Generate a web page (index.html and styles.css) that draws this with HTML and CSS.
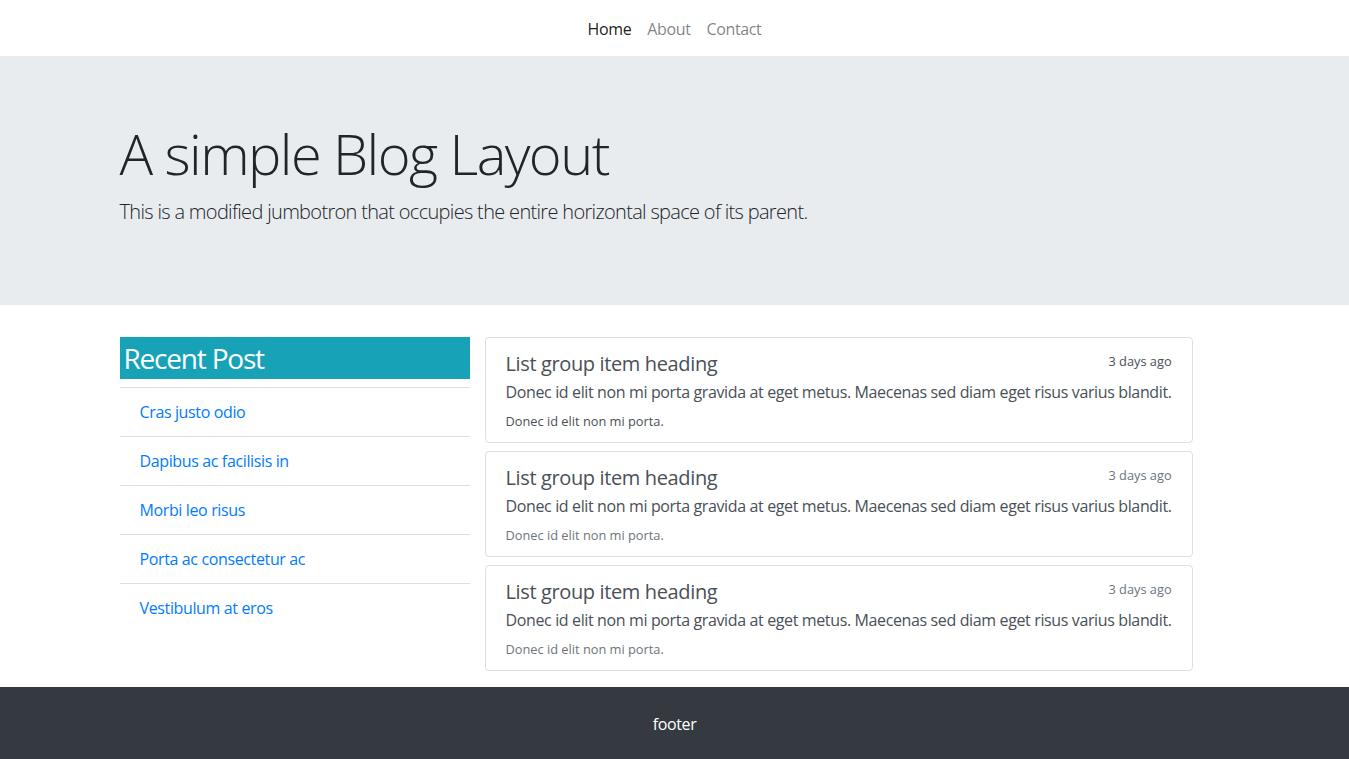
FILE: index.html
```html
<!DOCTYPE html>
<html lang="en">
<head>
<meta charset="utf-8">
<title>A simple Blog Layout</title>
<link rel="stylesheet" href="styles.css">
</head>
<body>
<nav class="navbar">
  <ul class="nav">
    <li><a class="nav-link active" href="#">Home</a></li>
    <li><a class="nav-link" href="#">About</a></li>
    <li><a class="nav-link" href="#">Contact</a></li>
  </ul>
</nav>
<header class="jumbotron">
  <div class="container">
    <h1 class="display">A simple Blog Layout</h1>
    <p class="lead">This is a modified jumbotron that occupies the entire horizontal space of its parent.</p>
  </div>
</header>
<main class="container row">
  <aside class="col-side">
    <h3 class="side-title">Recent Post</h3>
    <ul class="side-list">
      <li><a href="#">Cras justo odio</a></li>
      <li><a href="#">Dapibus ac facilisis in</a></li>
      <li><a href="#">Morbi leo risus</a></li>
      <li><a href="#">Porta ac consectetur ac</a></li>
      <li><a href="#">Vestibulum at eros</a></li>
    </ul>
  </aside>
  <section class="col-main">
    <a href="#" class="post">
      <div class="post-head">
        <h5 class="post-title">List group item heading</h5>
        <small class="post-date">3 days ago</small>
      </div>
      <p class="post-text">Donec id elit non mi porta gravida at eget metus. Maecenas sed diam eget risus varius blandit.</p>
      <small class="post-note">Donec id elit non mi porta.</small>
    </a>
    <a href="#" class="post">
      <div class="post-head">
        <h5 class="post-title">List group item heading</h5>
        <small class="post-date muted">3 days ago</small>
      </div>
      <p class="post-text">Donec id elit non mi porta gravida at eget metus. Maecenas sed diam eget risus varius blandit.</p>
      <small class="post-note muted">Donec id elit non mi porta.</small>
    </a>
    <a href="#" class="post">
      <div class="post-head">
        <h5 class="post-title">List group item heading</h5>
        <small class="post-date muted">3 days ago</small>
      </div>
      <p class="post-text">Donec id elit non mi porta gravida at eget metus. Maecenas sed diam eget risus varius blandit.</p>
      <small class="post-note muted">Donec id elit non mi porta.</small>
    </a>
  </section>
</main>
<footer class="footer">footer</footer>
</body>
</html>
```
FILE: styles.css
```css
* { box-sizing: border-box; }
html, body { margin: 0; }
body {
  font-family: "Open Sans", "Noto Sans", sans-serif;
  font-size: 16px;
  line-height: 1.5;
  letter-spacing: -0.023em;
  color: #212529;
  background: #fff;
}
a { text-decoration: none; }

.navbar {
  padding: 8px 16px;
  display: flex;
  justify-content: center;
}
.nav {
  list-style: none;
  margin: 0;
  padding: 0;
  display: flex;
}
.nav-link {
  display: block;
  padding: 9px 8px 7px;
  color: rgba(0,0,0,.5);
}
.nav-link.active { color: rgba(0,0,0,.9); }

.container {
  width: 1140px;
  margin: 0 auto;
  padding: 0 15px;
}

.jumbotron {
  background: #e9ecef;
  padding: 64px 0;
  margin-bottom: 32px;
}
.display {
  font-size: 56px;
  font-weight: 300;
  line-height: 1.2;
  letter-spacing: -0.028em;
  margin: 0 0 8px;
}
.lead {
  font-size: 20px;
  font-weight: 300;
  letter-spacing: -0.034em;
  margin: 0 0 14px;
  padding-top: 2px;
}

.row {
  display: flex;
  align-items: flex-start;
}
.col-side {
  width: 350px;
  flex: none;
}
.col-main {
  margin-left: 15px;
  display: flex;
  flex-direction: column;
  align-items: flex-start;
  gap: 8px;
}

.side-title {
  margin: 0 0 8px;
  padding: 5px 4px 3px;
  background: #17a2b8;
  color: #fff;
  font-size: 28px;
  font-weight: 400;
  line-height: 1.2;
  letter-spacing: -0.043em;
}
.side-list {
  list-style: none;
  margin: 0;
  padding: 0;
}
.side-list li {
  border-top: 1px solid rgba(0,0,0,.125);
  padding: 12px 20px;
}
.side-list a { color: #007bff; }

.post {
  display: block;
  padding: 12px 20px 10px;
  border: 1px solid rgba(0,0,0,.125);
  border-radius: 4px;
  color: #495057;
}
.post-head {
  display: flex;
  justify-content: space-between;
  gap: 16px;
}
.post-title {
  margin: 0 0 4px;
  padding-top: 2px;
  font-size: 20px;
  font-weight: 400;
  line-height: 1.2;
}
.post-head .post-date { padding-top: 2px; }
.post-date, .post-note { font-size: 12.8px; letter-spacing: 0; }
.post-text { margin: 0 0 4px; }
.muted { color: #6c757d; }

.footer {
  background: #343a40;
  color: #fff;
  text-align: center;
  margin-top: 16px;
  padding: 25px 0 24px;
}
```
